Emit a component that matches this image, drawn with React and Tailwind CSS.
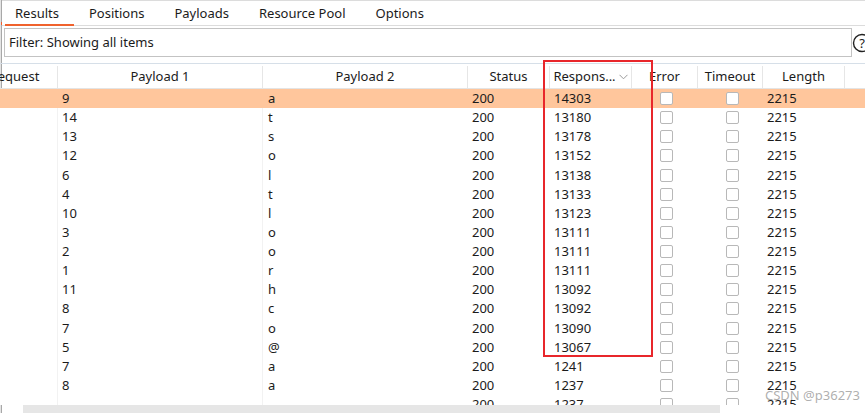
import React from "react";

const rows = [
  ["9", "a", "200", "14303"],
  ["14", "t", "200", "13180"],
  ["13", "s", "200", "13178"],
  ["12", "o", "200", "13152"],
  ["6", "l", "200", "13138"],
  ["4", "t", "200", "13133"],
  ["10", "l", "200", "13123"],
  ["3", "o", "200", "13111"],
  ["2", "o", "200", "13111"],
  ["1", "r", "200", "13111"],
  ["11", "h", "200", "13092"],
  ["8", "c", "200", "13092"],
  ["7", "o", "200", "13090"],
  ["5", "@", "200", "13067"],
  ["7", "a", "200", "1241"],
  ["8", "a", "200", "1237"],
  ["", "", "200", "1237"],
];

const tabs = ["Results", "Positions", "Payloads", "Resource Pool", "Options"];

function Check() {
  return <div className="w-[13px] h-[13px] rounded-[2px] border border-[#b8b8b8] bg-white" />;
}

export default function App() {
  return (
    <div
      className="relative w-[865px] h-[413px] bg-white overflow-hidden flex text-[13px] text-[#1b1b1b]"
      style={{ fontFamily: '"Noto Sans", "Open Sans", sans-serif' }}
    >
      <div className="w-px h-full bg-[#e4e4e4]" />
      <div className="w-px h-full bg-[#a8a8a8] flex flex-col">
        <div className="h-[22px]" />
        <div className="h-[3px] bg-[#f06030]" />
      </div>
      <div className="flex-1 flex flex-col min-w-0">
        {/* tab bar */}
        <div className="h-[26px] border-t border-b border-[#dcdcdc] flex items-stretch">
          {tabs.map((t, i) => (
            <div
              key={t}
              className={
                i === 0
                  ? "relative ml-[3px] pl-[10px] pr-[15px] flex items-center leading-none"
                  : "px-[15px] flex items-center leading-none"
              }
            >
              {t}
              {i === 0 && <div className="absolute left-0 right-0 bottom-[-1px] h-[2px] bg-[#f0622d]" />}
            </div>
          ))}
        </div>
        {/* filter row */}
        <div className="h-[37px] pt-[2px] flex items-start overflow-hidden">
          <div className="shrink-0 ml-[2px] w-[848px] h-[29px] border border-[#c3c3c3] flex items-center pl-[4px] bg-white">
            Filter: Showing all items
          </div>
          <svg className="shrink-0 mt-[5px]" width="20" height="20" viewBox="0 0 20 20">
            <circle cx="10" cy="10" r="8.5" fill="none" stroke="#222" strokeWidth="1.4" />
            <text x="10" y="14.5" textAnchor="middle" fontSize="13" fill="#222" fontFamily="Noto Sans, sans-serif">?</text>
          </svg>
        </div>
        {/* table */}
        <div className="flex-1 min-h-0 overflow-hidden border-t border-[#d6dfe8] -ml-[2px]">
          <div className="h-[25px] pt-[2px] flex border-b border-[#e4e4e4]">
            <div className="w-[58px] overflow-hidden border-r border-[#e6e6e6] flex items-center">
              <div className="w-[79px] shrink-0 -ml-[25px] text-center">Request</div>
            </div>
            <div className="w-[205px] border-r border-[#e6e6e6] flex items-center justify-center">Payload 1</div>
            <div className="w-[205px] border-r border-[#e6e6e6] flex items-center justify-center">Payload 2</div>
            <div className="w-[82px] border-r border-[#e6e6e6] flex items-center justify-center">Status</div>
            <div className="w-[82px] border-r border-[#e6e6e6] flex items-center justify-center gap-[3px]">
              <span>Respons...</span>
              <svg width="9" height="6" viewBox="0 0 9 6">
                <path d="M0.5 0.8 L4.5 4.8 L8.5 0.8" fill="none" stroke="#9a9a9a" strokeWidth="1" />
              </svg>
            </div>
            <div className="w-[66px] border-r border-[#e6e6e6] flex items-center justify-center">Error</div>
            <div className="w-[65px] border-r border-[#e6e6e6] flex items-center justify-center">Timeout</div>
            <div className="w-[82px] border-r border-[#e6e6e6] flex items-center justify-center">Length</div>
            <div className="flex-1" />
          </div>
          {rows.map((r, i) => (
            <div
              key={i}
              className={"h-[19.125px] flex items-center leading-none " + (i === 0 ? "bg-[#ffc69c]" : "bg-white")}
            >
              <div className={"w-[58px] h-full border-r " + (i === 0 ? "border-transparent" : "border-[#f2f2f2]")} />
              <div className={"w-[205px] h-full pl-[4px] flex items-center border-r " + (i === 0 ? "border-transparent" : "border-[#f2f2f2]")}>{r[0]}</div>
              <div className="w-[205px] h-full pl-[5px] flex items-center">{r[1]}</div>
              <div className="w-[82px] h-full pl-[4px] flex items-center">{r[2]}</div>
              <div className="w-[82px] h-full pl-[4px] flex items-center">{r[3]}</div>
              <div className="w-[66px] h-full flex items-center justify-center pl-[3px]"><Check /></div>
              <div className="w-[65px] h-full flex items-center justify-center pl-[3px]"><Check /></div>
              <div className="w-[82px] h-full pl-[4px] flex items-center">2215</div>
              <div className="flex-1" />
            </div>
          ))}
        </div>
        {/* horizontal scrollbar */}
        <div className="h-[8px] shrink-0 flex -ml-[2px]">
          <div className="ml-[23px] w-[697px] h-full bg-[#e6e6e6]" />
        </div>
      </div>
      {/* red highlight box */}
      <div className="absolute left-[543px] top-[60px] w-[110px] h-[297px] border-2 border-[#e8262b]" />
      {/* watermark */}
      <div className="absolute left-[765px] top-[389px] text-[13px] text-[#9a9a9a]/80 leading-none">CSDN @p36273</div>
    </div>
  );
}
